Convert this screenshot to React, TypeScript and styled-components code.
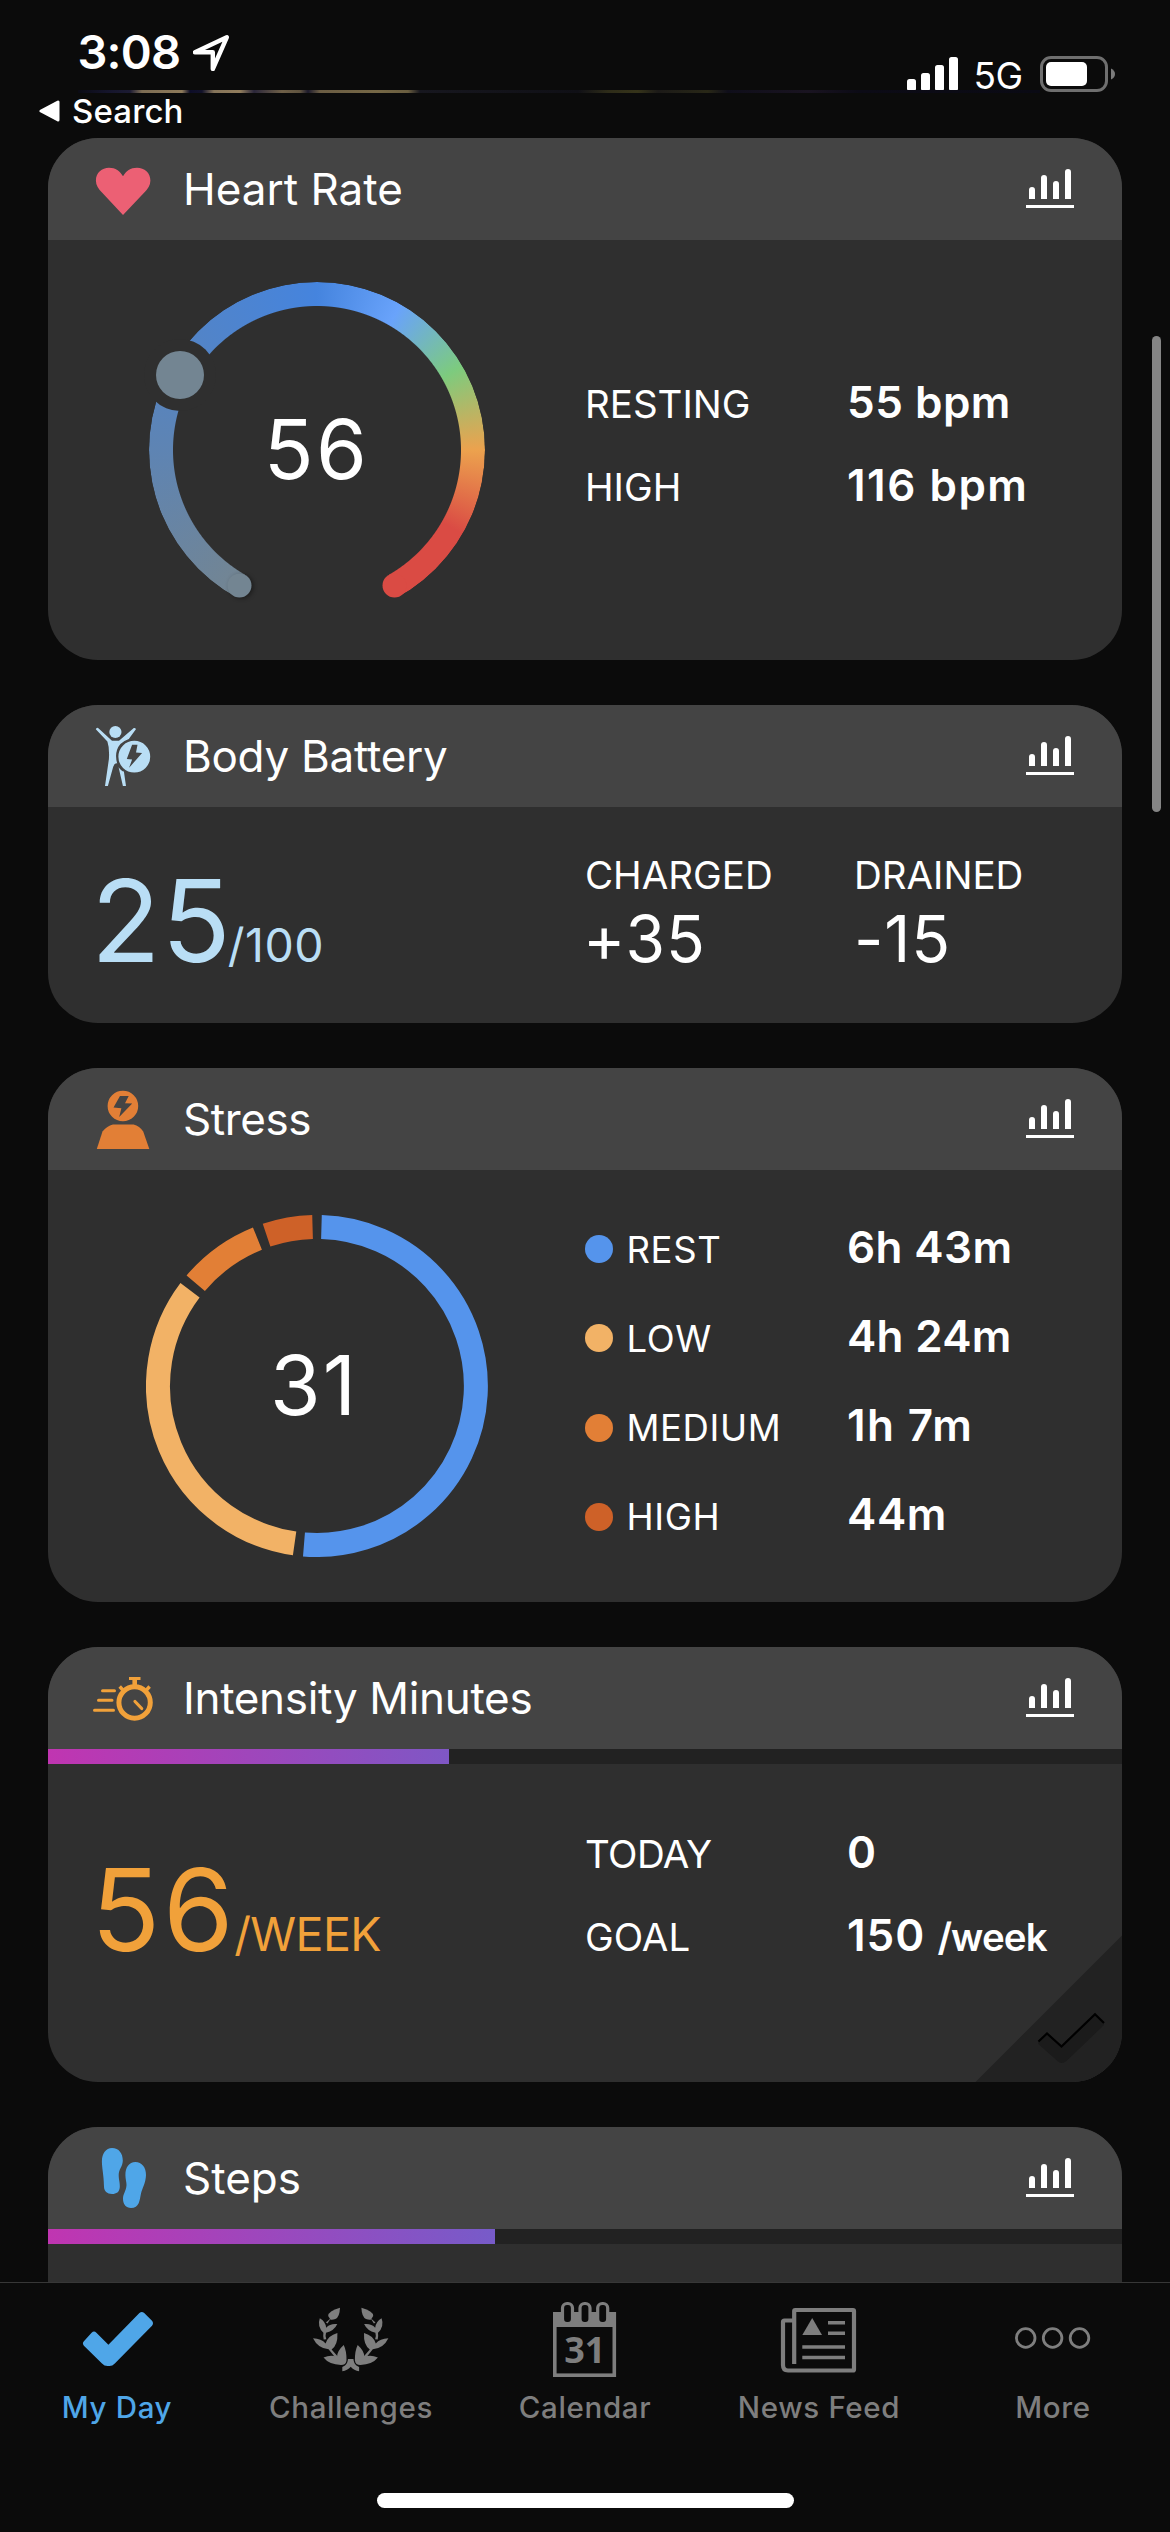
import React from "react";
import styled, { createGlobalStyle } from "styled-components";

const GlobalStyle = createGlobalStyle`
  *, *::before, *::after { box-sizing: border-box; }
  body {
    margin: 0;
    background: #0b0b0b;
    color: #fff;
    font-family: Inter, "Liberation Sans", sans-serif;
    -webkit-font-smoothing: antialiased;
  }
  svg { display: block; flex: none; }
`;

/* ---------- shell ---------- */

const Screen = styled.div`
  position: relative;
  display: flex;
  flex-direction: column;
  width: 1170px;
  height: 2532px;
  overflow: hidden;
  background: #0b0b0b;
`;

const StatusBar = styled.header`
  position: relative;
  display: flex;
  justify-content: space-between;
  flex: none;
  height: 138px;
`;

const PhotoStrip = styled.div`
  position: absolute;
  left: 78px;
  top: 90px;
  width: 962px;
  height: 3px;
  background: linear-gradient(
    90deg,
    #0b0b14 0,
    #15152c 30px,
    #1c1b33 52px,
    #7d6d54 64px,
    #8d7a5a 104px,
    #0d0d28 112px,
    #12122a 124px,
    #85745a 136px,
    #917d5c 162px,
    #2a263a 176px,
    #6f6048 204px,
    #5f533f 222px,
    #1c1a2c 230px,
    #6b5d44 242px,
    #766846 300px,
    #6a5e40 330px,
    #17171f 342px,
    #101016 500px,
    #2e2c19 530px,
    #36341a 560px,
    #1c1a18 580px,
    #292817 630px,
    #0f0e1a 650px,
    #1a1421 730px,
    #0c0b16 780px,
    #0a0a14 100%
  );
`;

const StatusLeft = styled.div`
  display: flex;
  flex-direction: column;
  padding-top: 17px;
`;

const TimeRow = styled.div`
  display: flex;
  align-items: center;
  height: 71px;
  padding-left: 77.5px;
`;

const Time = styled.span`
  width: 115.5px;
  font-size: 47px;
  font-weight: 600;
  line-height: 69px;
  padding-bottom: 2px;
  letter-spacing: -0.8px;
`;

const BackRow = styled.div`
  display: flex;
  align-items: center;
  gap: 12px;
  height: 46px;
  padding-left: 39px;
`;

const BackLabel = styled.span`
  font-size: 33px;
  font-weight: 500;
  letter-spacing: 0.13px;
`;

const StatusRight = styled.div`
  display: flex;
  align-items: center;
  height: 36px;
  margin: 56px 55px 0 0;
`;

const Network = styled.span`
  width: 82px;
  padding: 4px 0 0 15.5px;
  font-size: 37px;
  line-height: 36px;
  letter-spacing: -0.5px;
`;

const ScrollThumb = styled.div`
  position: absolute;
  right: 9px;
  top: 336px;
  width: 9px;
  height: 476px;
  border-radius: 5px;
  background: #858585;
`;

const Feed = styled.main`
  display: flex;
  flex-direction: column;
  gap: 45px;
  height: 2144px;
  flex: none;
  padding: 0 48px;
  overflow: hidden;
`;

/* ---------- cards ---------- */

const CardShell = styled.section`
  position: relative;
  flex: none;
  border-radius: 50px;
  overflow: hidden;
  background: #2f2f2f;
`;

const CardHeader = styled.div`
  display: flex;
  align-items: center;
  height: 102px;
  padding: 0 48px 0 24px;
  background: #444;
`;

const CardTitle = styled.h2<{ $spacing?: number }>`
  flex: 1;
  margin: 0 0 0 9px;
  font-size: 44px;
  font-weight: 400;
  line-height: 60px;
  letter-spacing: ${(p) => p.$spacing ?? 0}px;
`;

const CardBody = styled.div<{ $height: number }>`
  display: grid;
  grid-template-columns: 537px 1fr;
  height: ${(p) => p.$height}px;
`;

const Track = styled.div`
  height: 15px;
  background: #222;
`;

const TrackFill = styled.div<{ $end: string }>`
  height: 100%;
  background: linear-gradient(90deg, #c035b1, ${(p) => p.$end});
`;

const ChartCell = styled.div`
  display: grid;
  place-items: center;
  isolation: isolate;
  > * { grid-area: 1 / 1; }
  > svg { z-index: 1; }
`;

const ChartValue = styled.div<{ $spacing: number; $nudge?: number }>`
  z-index: 2;
  margin-right: ${(p) => p.$nudge ?? 0}px;
  font-size: 82px;
  line-height: 100px;
  letter-spacing: ${(p) => p.$spacing}px;
`;

const GaugeRing = styled.div`
  width: 336px;
  height: 336px;
  border-radius: 50%;
  background: conic-gradient(
    #4584de 0deg,
    #69a3fb 30deg,
    #7dcb7e 60deg,
    #eca24e 90deg,
    #da4b44 120deg,
    #da4b44 150deg,
    transparent 150deg,
    transparent 210deg,
    #738592 210deg,
    #5e84b3 270deg,
    #4584de 360deg
  );
  mask-image: radial-gradient(
    closest-side,
    transparent calc(100% - 24.5px),
    #000 calc(100% - 23.5px)
  );
`;

const BigFigure = styled.div<{ $top: number; $color: string }>`
  display: flex;
  align-items: baseline;
  padding: ${(p) => p.$top}px 0 0 43px;
  color: ${(p) => p.$color};
`;

const BigNumber = styled.span<{ $spacing: number }>`
  font-size: 114px;
  line-height: 120px;
  letter-spacing: ${(p) => p.$spacing}px;
`;

const BigUnit = styled.span<{ $spacing: number; $pull: number }>`
  margin-left: ${(p) => -p.$pull}px;
  font-size: 46.5px;
  line-height: 60px;
  letter-spacing: ${(p) => p.$spacing}px;
`;

const Stats = styled.div<{ $top: number }>`
  padding-top: ${(p) => p.$top}px;
`;

const StatRow = styled.div<{ $height: number }>`
  display: grid;
  grid-template-columns: 262px 1fr;
  align-items: baseline;
  height: ${(p) => p.$height}px;
  line-height: ${(p) => p.$height}px;
`;

const StatLabel = styled.span<{ $small?: boolean; $spacing?: number }>`
  font-size: ${(p) => (p.$small ? 36.5 : 38.5)}px;
  line-height: 50px;
  letter-spacing: ${(p) => p.$spacing ?? 0}px;
  white-space: nowrap;
`;

const StatValue = styled.span<{ $spacing?: number }>`
  font-size: 44px;
  font-weight: 600;
  letter-spacing: ${(p) => p.$spacing ?? 0.5}px;
  white-space: nowrap;
`;

const StatUnit = styled.span`
  font-size: 38.5px;
  letter-spacing: -0.9px;
`;

const Dot = styled.i<{ $color: string }>`
  display: inline-block;
  width: 28px;
  height: 28px;
  margin-right: 13.5px;
  border-radius: 50%;
  vertical-align: -0.7px;
  background: ${(p) => p.$color};
`;

const Deltas = styled.div`
  display: grid;
  grid-template-columns: 269px 1fr;
  align-content: start;
  padding-top: 43px;
`;

const Delta = styled.div`
  display: flex;
  flex-direction: column;
`;

const DeltaLabel = styled.span`
  font-size: 38.5px;
  line-height: 50px;
`;

const DeltaValue = styled.span<{ $pull?: number }>`
  margin-left: ${(p) => -(p.$pull ?? 0)}px;
  font-size: 64px;
  line-height: 77px;
  letter-spacing: 0.9px;
`;

const GoalCorner = styled.svg`
  position: absolute;
  right: 0;
  bottom: 0;
`;

/* ---------- tab bar ---------- */

const Bottom = styled.footer`
  display: flex;
  flex-direction: column;
  justify-content: space-between;
  align-items: center;
  flex: none;
  height: 250px;
  padding-bottom: 24px;
  border-top: 1px solid #373737;
  background: #0b0b0b;
`;

const Tabs = styled.nav`
  display: grid;
  grid-template-columns: repeat(5, 234px);
  padding-top: 13px;
`;

const Tab = styled.div<{ $active?: boolean }>`
  display: flex;
  flex-direction: column;
  align-items: center;
  gap: 7px;
  color: ${(p) => (p.$active ? "#4fa6e8" : "#7e7e7e")};
`;

const TabLabel = styled.span`
  font-size: 29.5px;
  font-weight: 500;
  line-height: 40px;
  letter-spacing: 0.65px;
  white-space: nowrap;
`;

const HomeIndicator = styled.div`
  width: 417px;
  height: 15px;
  border-radius: 8px;
  background: #fff;
`;

/* ---------- icons ---------- */

const LocationArrow = () => (
  <svg width="36" height="36" viewBox="193 35 36 36">
    <path
      d="M195 52.3 226.8 37.3 212.8 69V52.3Z"
      fill="none"
      stroke="#fff"
      strokeWidth="4.4"
      strokeLinejoin="round"
    />
  </svg>
);

const BackTriangle = () => (
  <svg width="21" height="22" viewBox="0 0 21 22">
    <path d="M2 11 19 2v18Z" fill="#fff" stroke="#fff" strokeWidth="3" strokeLinejoin="round" />
  </svg>
);

const Signal = () => (
  <svg width="51" height="36" viewBox="0 0 51 36" fill="#fff">
    <rect x="0" y="23" width="9" height="12" rx="2.5" />
    <rect x="14" y="17" width="9" height="18" rx="2.5" />
    <rect x="28" y="9" width="9" height="26" rx="2.5" />
    <rect x="42" y="1" width="9" height="34" rx="2.5" />
  </svg>
);

const Battery = () => (
  <svg width="75" height="36" viewBox="0 0 75 36">
    <rect x="1.5" y="1.5" width="65" height="33" rx="9.5" fill="none" stroke="#6f6f6f" strokeWidth="3" />
    <rect x="6" y="6" width="41" height="24" rx="5" fill="#fff" />
    <path d="M71 12.5q4 2 4 5.5t-4 5.5z" fill="#7a7a7a" />
  </svg>
);

const BarsIcon = () => (
  <svg width="48" height="40" viewBox="0 0 48 40" fill="#fff">
    <path d="M3 30V21a3 3 0 0 1 6 0v9zM15 30V9a3 3 0 0 1 6 0v21zM27 30V15a3 3 0 0 1 6 0v15zM39 30V3a3 3 0 0 1 6 0v27z" />
    <rect y="36" width="48" height="3" />
  </svg>
);

const HeartIcon = () => (
  <svg width="102" height="102" viewBox="72 138 102 102">
    <path
      d="M123 215 102 192.5Q95.9 186.5 95.9 180.5C95.9 172.500 102 167.700 109 167.700c6.500 0 11 3.300 14 8.500 3-5.200 7.500-8.500 14-8.500 7.500 0 13.400 4.800 13.400 12.800q0 6-6.100 12z"
      fill="#ec6074"
    />
  </svg>
);

const BodyBatteryIcon = () => (
  <svg width="102" height="102" viewBox="72 705 102 102" fill="#b9def5">
    <ellipse cx="115.400" cy="732" rx="6.100" ry="6.100" />
    <path d="M95.800 729.200q1.200-2 2.600-1L112 740.800h7L133.800 728q1.700-.4 2.100 1.300L128.800 739q-9.500 3.500-11.800 11-2 6 .2 13.500-2.400-1-4 3.200L107.900 786H105l3.900-27q.7-11-1.500-17.500z" />
    <path d="M118.600 767.200q2.800 4 5.300 4.300L126 786h-3.100z" />
    <path
      fillRule="evenodd"
      d="M134.300 740.800a15.900 15.900 0 1 1 0 31.800 15.900 15.900 0 1 1 0-31.800zM132.100 744.700l-5.300 14.300 5.300.5-3 8.300 13-14.800-6.100-.4 1.500-7.900z"
    />
  </svg>
);

const StressIcon = () => (
  <svg width="102" height="102" viewBox="72 1068 102 102" fill="#e27f36">
    <path
      fillRule="evenodd"
      d="M122.900 1090.700a15.300 15.300 0 1 1 0 30.600 15.300 15.300 0 1 1 0-30.600zM120 1096l-6.500 11.500 7.900.7-2.200 8.700 13-13.300-7.200-.3 3.700-7.300z"
    />
    <path d="M112.900 1124.600h20.700q6 1.700 9.600 6.800l6.100 17.600H96.800l5.700-17.600q4.500-5.300 10.400-6.800z" />
  </svg>
);

const IntensityIcon = () => (
  <svg width="102" height="102" viewBox="72 1647 102 102" fill="none" stroke="#f1a13a">
    <circle cx="134.600" cy="1702.500" r="15.700" strokeWidth="5" />
    <path d="M129 1678.500h11.500" strokeWidth="3.200" />
    <path d="M134.700 1678v8" strokeWidth="4.600" />
    <path d="M119.700 1686.500l4 4.500M149.600 1686.500l-4 4.500" strokeWidth="3.400" />
    <path d="M135 1701.500l6.700 7" strokeWidth="3.200" strokeLinecap="round" />
    <path d="M102.500 1690.700H114.500M98.500 1700.300H112M94.500 1710.300H113.500" strokeWidth="3" strokeLinecap="round" />
  </svg>
);

const StepsIcon = () => (
  <svg width="102" height="102" viewBox="72 2127 102 102" fill="#4fa6e8">
    <path d="M112 2148c7 0 10.800 5.500 10.800 12.500 0 6-4 8.500-4.100 14.500 0 5 1.300 7 1.100 12-.3 5-3.300 7-7.800 7-5 0-7.800-3-8-7-.2-8-.6-10-1.300-16-.4-3-.8-7-.8-9.500 0-8 4-13.500 10.100-13.500z" />
    <path d="M135.400 2162c6.500 0 10.700 5.500 10.600 13-.2 8-3.700 13-5 18.500-.9 4-.9 6-2.200 9.500-1.300 3-4 5-7.800 5-5 0-8-4-8-9 0-5.500 3.300-8 3.500-14 .1-3-1.100-6-1.100-10 0-7.500 3.500-13 10-13z" />
  </svg>
);

const CHECK_SHAPE =
  "M83.900 2341.300 91.600 2332.800Q94 2330.300 96.400 2332.800L108.400 2344.800 139.400 2313Q141.800 2310.800 144.200 2313L152 2320.800Q154 2323.300 152 2325.800L114.800 2363.500Q112.500 2366 109.500 2366H107.500Q104.300 2366 102 2363.500L83.900 2345.800Q81.900 2343.300 83.900 2341.300Z";

const CheckIcon = () => (
  <svg width="100" height="84" viewBox="67 2296 100 84" fill="currentColor">
    <path d={CHECK_SHAPE} />
  </svg>
);

const LaurelHalf = () => (
  <>
    <path d="M340 2307.800q-.4 9.500-4.600 11.200-3 1.200-5 .6l-2.200-3.600q0-5 11.800-8.200z" />
    <path d="M331 2318l-3.500 5.500-1.600-1z" />
    <path d="M319.800 2318.200q5.800 3.400 6.400 9.500 4-4.500 11.100-3.600-3 6.800-11.300 8.600-1 3 .3 6.500l-2.600.3q-.8-3.500-.3-6.700-6.500-6.400-3.600-14.600z" />
    <path d="M313 2338.300q8.500.3 12.600 5.200 2.200-8 11.800-10.600.6 12-5.800 16.500l7 8-2 1.800-8-10q-10.500-.5-15.600-10.900z" />
    <path d="M323.500 2357.400q7.500-3 13.500-.5 0-6 6.700-12 3 6 2.800 15.500-.5 4.500-5.500 4.500-12-.5-17.500-7.500z" />
  </>
);

const LaurelIcon = () => (
  <svg width="100" height="84" viewBox="301 2296 100 84" fill="currentColor">
    <LaurelHalf />
    <g transform="translate(701.400 0) scale(-1 1)">
      <LaurelHalf />
    </g>
    <path d="M348 2359h5.400q.5 4.600 3 6.400l2.700 1.700v4.200q-5.100-.8-8.400-4.600-3.300 3.800-8.400 4.600v-4.200l2.700-1.700q2.500-1.800 3-6.400z" />
  </svg>
);

const DateText = styled.text`
  font: 700 36px "Open Sans", sans-serif;
  text-anchor: middle;
`;

const CalendarIcon = () => (
  <svg width="100" height="84" viewBox="535 2296 100 84">
    <rect x="554.800" y="2314" width="59.500" height="61.200" fill="none" stroke="currentColor" strokeWidth="3.600" />
    <rect x="553" y="2312" width="63" height="15" fill="currentColor" />
    {[567.5, 585, 602.700].map((x) => (
      <rect
        key={x}
        x={x - 5}
        y="2303.500"
        width="10"
        height="20"
        rx="4.500"
        fill="#0b0b0b"
        stroke="currentColor"
        strokeWidth="3.200"
      />
    ))}
    <DateText x="584.800" y="2362.500" fill="currentColor">31</DateText>
  </svg>
);

const NewsIcon = () => (
  <svg width="100" height="84" viewBox="769 2296 100 84" fill="none" stroke="currentColor" strokeWidth="4.200">
    <path d="M794.200 2364V2311q0-1 1-1H853q1 0 1 1v58.500q0 1-1 1H788q-5 0-5-5.500v-43q0-1.500 1.500-1.500H794" />
    <path d="M812.200 2318 822 2335H802.300Z" fill="currentColor" stroke="none" />
    <path d="M828 2322.700h17M828 2333.200h17M802.300 2347h42.700M802.300 2357.500h42.700" strokeWidth="3.600" />
  </svg>
);

const MoreIcon = () => (
  <svg width="100" height="84" viewBox="1003 2296 100 84" fill="none" stroke="currentColor" strokeWidth="2.800">
    <circle cx="1025.700" cy="2338" r="9.300" />
    <circle cx="1052.600" cy="2338" r="9.300" />
    <circle cx="1079.500" cy="2338" r="9.300" />
  </svg>
);

/* ---------- charts ---------- */

const CapShadow = styled.circle`
  filter: drop-shadow(2px 1px 2px rgba(0, 0, 0, 0.4));
`;

const GaugeMarks = () => (
  <svg width="336" height="336" viewBox="-168 -168 336 336" overflow="visible">
    <CapShadow cx="-77.500" cy="135.500" r="12" fill="#738592" />
    <circle cx="77.500" cy="135.500" r="12" fill="#da4b44" />
    <circle cx="-137" cy="-75" r="36" fill="#2f2f2f" />
    <circle cx="-137" cy="-75" r="24" fill="#738592" />
  </svg>
);

const SEGMENTS = [
  { from: 1.6, to: 184.700, color: "#5594ec" },
  { from: 188.100, to: 307, color: "#f2b266" },
  { from: 310.300, to: 338, color: "#e27f36" },
  { from: 341.500, to: 358.400, color: "#ce6128" },
];

const point = (deg: number, r: number) => {
  const a = (deg * Math.PI) / 180;
  return `${(r * Math.sin(a)).toFixed(2)} ${(-r * Math.cos(a)).toFixed(2)}`;
};

const Donut = () => (
  <svg width="342" height="342" viewBox="-171 -171 342 342" fill="none" strokeWidth="24">
    {SEGMENTS.map((s) => (
      <path
        key={s.color}
        stroke={s.color}
        d={`M${point(s.from, 159)}A159 159 0 ${s.to - s.from > 180 ? 1 : 0} 1 ${point(s.to, 159)}`}
      />
    ))}
  </svg>
);

/* ---------- card pieces ---------- */

type CardProps = {
  title: string;
  spacing?: number;
  icon: React.ReactNode;
  progress?: { percent: number; end: string };
  height: number;
  children?: React.ReactNode;
};

const Card = ({ title, spacing, icon, progress, height, children }: CardProps) => (
  <CardShell>
    <CardHeader>
      {icon}
      <CardTitle $spacing={spacing}>{title}</CardTitle>
      <BarsIcon />
    </CardHeader>
    {progress && (
      <Track>
        <TrackFill $end={progress.end} style={{ width: `${progress.percent}%` }} />
      </Track>
    )}
    <CardBody $height={height}>{children}</CardBody>
  </CardShell>
);

const STRESS_ROWS = [
  { label: "REST", value: "6h 43m", color: "#5594ec", spacing: 0.4 },
  { label: "LOW", value: "4h 24m", color: "#f2b266", spacing: 0.3 },
  { label: "MEDIUM", value: "1h 7m", color: "#e27f36", spacing: 1.4 },
  { label: "HIGH", value: "44m", color: "#ce6128", spacing: 0.6 },
];

const TABS = [
  { label: "My Day", icon: <CheckIcon />, active: true },
  { label: "Challenges", icon: <LaurelIcon /> },
  { label: "Calendar", icon: <CalendarIcon /> },
  { label: "News Feed", icon: <NewsIcon /> },
  { label: "More", icon: <MoreIcon /> },
];

export default function App() {
  return (
    <>
      <GlobalStyle />
      <Screen>
        <StatusBar>
          <PhotoStrip />
          <StatusLeft>
            <TimeRow>
              <Time>3:08</Time>
              <LocationArrow />
            </TimeRow>
            <BackRow>
              <BackTriangle />
              <BackLabel>Search</BackLabel>
            </BackRow>
          </StatusLeft>
          <StatusRight>
            <Signal />
            <Network>5G</Network>
            <Battery />
          </StatusRight>
        </StatusBar>

        <Feed>
          <Card title="Heart Rate" icon={<HeartIcon />} height={420}>
            <ChartCell>
              <GaugeRing />
              <GaugeMarks />
              <ChartValue $spacing={2.5}>56</ChartValue>
            </ChartCell>
            <Stats $top={120.5}>
              <StatRow $height={83}>
                <StatLabel>RESTING</StatLabel>
                <StatValue>55 bpm</StatValue>
              </StatRow>
              <StatRow $height={83}>
                <StatLabel>HIGH</StatLabel>
                <StatValue $spacing={1.5}>116 bpm</StatValue>
              </StatRow>
            </Stats>
          </Card>

          <Card title="Body Battery" spacing={-0.28} icon={<BodyBatteryIcon />} height={216}>
            <BigFigure $top={54} $color="#b9def5">
              <BigNumber $spacing={1}>25</BigNumber>
              <BigUnit $spacing={0.5} $pull={4}>/100</BigUnit>
            </BigFigure>
            <Deltas>
              <Delta>
                <DeltaLabel>CHARGED</DeltaLabel>
                <DeltaValue $pull={2}>+35</DeltaValue>
              </Delta>
              <Delta>
                <DeltaLabel>DRAINED</DeltaLabel>
                <DeltaValue>-15</DeltaValue>
              </Delta>
            </Deltas>
          </Card>

          <Card title="Stress" spacing={-0.4} icon={<StressIcon />} height={432}>
            <ChartCell>
              <Donut />
              <ChartValue $spacing={2} $nudge={5}>31</ChartValue>
            </ChartCell>
            <Stats $top={32.5}>
              {STRESS_ROWS.map((row) => (
                <StatRow $height={89.3} key={row.label}>
                  <StatLabel $small $spacing={0.6}>
                    <Dot $color={row.color} />
                    {row.label}
                  </StatLabel>
                  <StatValue $spacing={row.spacing}>{row.value}</StatValue>
                </StatRow>
              ))}
            </Stats>
          </Card>

          <Card
            title="Intensity Minutes"
            spacing={-0.33}
            icon={<IntensityIcon />}
            progress={{ percent: 37.33, end: "#7f57c5" }}
            height={318}
          >
            <BigFigure $top={86} $color="#f1a13a">
              <BigNumber $spacing={2.6}>56</BigNumber>
              <BigUnit $spacing={-0.6} $pull={2}>/WEEK</BigUnit>
            </BigFigure>
            <Stats $top={46.5}>
              <StatRow $height={83}>
                <StatLabel $spacing={-0.6}>TODAY</StatLabel>
                <StatValue>0</StatValue>
              </StatRow>
              <StatRow $height={83}>
                <StatLabel>GOAL</StatLabel>
                <StatValue $spacing={1}>
                  150 <StatUnit>/week</StatUnit>
                </StatValue>
              </StatRow>
            </Stats>
            <GoalCorner width="147" height="147" viewBox="975 1935 147 147">
              <path d="M1122 1935.500V2082H975.500Z" fill="#222" />
              <path
                d="M1038.300 2041 1047 2033 1061.500 2046 1095 2013.500 1104 2022V2025L1066.500 2061Q1061.500 2065 1057.500 2061L1038.300 2044Z"
                fill="#1b1b1b"
              />
              <path
                d="M1038.500 2041.500 1047 2033.500 1061.500 2046.500 1095 2014.200 1104 2023"
                fill="none"
                stroke="#000"
                strokeWidth="2.200"
              />
            </GoalCorner>
          </Card>

          <Card
            title="Steps"
            icon={<StepsIcon />}
            progress={{ percent: 41.6, end: "#775bc9" }}
            height={318}
          />
        </Feed>

        <Bottom>
          <Tabs>
            {TABS.map((tab) => (
              <Tab key={tab.label} $active={tab.active}>
                {tab.icon}
                <TabLabel>{tab.label}</TabLabel>
              </Tab>
            ))}
          </Tabs>
          <HomeIndicator />
        </Bottom>
        <ScrollThumb />
      </Screen>
    </>
  );
}
